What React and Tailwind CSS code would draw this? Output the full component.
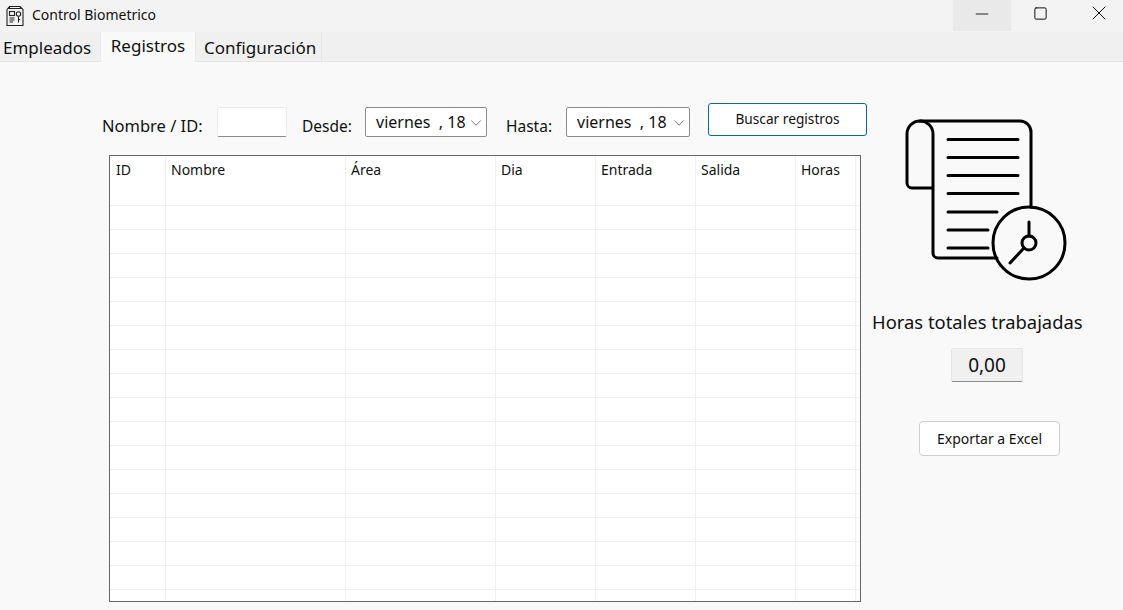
import { useState } from "react";
import { Minus, Square, X, ChevronDown } from "lucide-react";

const columnas = ["ID", "Nombre", "Área", "Dia", "Entrada", "Salida", "Horas", ""];
const filas = Array.from({ length: 18 }, (_, i) => i);
const gridCols = "grid grid-cols-[56px_180px_150px_100px_100px_100px_60px_1fr]";

function AppIcon() {
    return (
        <svg width="20" height="22" viewBox="0 0 20 22" fill="none" stroke="#222" strokeWidth="1.1">
            <path d="M2 4.5L4.5 1.5H15L18 4.5V20.5H2V4.5Z" />
            <path d="M4.5 1.5V3.5M15 1.5L16 3.5H3" />
            <rect x="4.5" y="6.5" width="5" height="4" />
            <path d="M4.5 13h5M4.5 15h5M4.5 17h3.5" />
            <circle cx="13.5" cy="9" r="2.2" />
            <path d="M13.5 11.2V17.5M13.5 14.5H15.2" />
        </svg>
    );
}

function RegistrosIcon() {
    return (
        <svg width="200" height="190" viewBox="0 0 200 190" fill="none" stroke="#000" strokeWidth="3" strokeLinecap="round" strokeLinejoin="round" className="block">
            <path d="M30 16H130a11 11 0 0 1 11 11V102" />
            <path d="M107 153H48a5 5 0 0 1-5-5V29a13 13 0 0 0-26 0V78a5 5 0 0 0 5 5H43" />
            <path d="M58 34.5H128M58 52.5H128M58 70.5H128M58 88.5H128M58 107H107M58 125H98M58 143H98" />
            <circle cx="139" cy="138" r="36" />
            <circle cx="139" cy="138" r="7" />
            <path d="M139 117V131M120 158L134 143" />
        </svg>
    );
}

function FechaSelect({ ancho }) {
    return (
        <div className={`${ancho} h-[30px] bg-white border border-[#8c8c8c] rounded-[2px] flex items-start pt-[2px] pl-[10px] pr-[1px] justify-between`}>
            <span className="text-[16px] leading-[24px] whitespace-pre">viernes  , 18</span>
            <ChevronDown size={18} strokeWidth={1} className="mt-[4px] text-[#444]" />
        </div>
    );
}

export default function App() {
    const [tab] = useState("Registros");

    return (
        <div className="w-[1123px] h-[610px] overflow-hidden bg-[#f9f9f9] text-[#111] font-['Noto_Sans',sans-serif] flex flex-col">
            <div className="h-8 bg-[#f3f3f3] flex items-center justify-between shrink-0">
                <div className="flex items-center pl-[5px] gap-[7px]">
                    <AppIcon />
                    <span className="text-[14px] mb-[3px]">Control Biometrico</span>
                </div>
                <div className="flex h-[31px] self-start">
                    <div className="w-[58px] bg-[#e9e9e9] flex items-center justify-center pb-[4px]">
                        <Minus size={20} strokeWidth={1.1} />
                    </div>
                    <div className="w-[58px] flex items-center justify-center pb-[5px]">
                        <Square size={15} strokeWidth={1.6} />
                    </div>
                    <div className="w-[54px] flex items-center justify-center pb-[5px] pl-[6px]">
                        <X size={24} strokeWidth={1} />
                    </div>
                </div>
            </div>

            <div className="h-[30px] bg-[#f0f0f0] border-b border-[#e5e5e5] flex shrink-0">
                <div className="w-[100px] pl-[3px] text-[17px] leading-[30px] pt-px">Empleados</div>
                <div className={`w-[96px] h-[30px] bg-[#f9f9f9] text-center text-[17px] leading-[28px] border-x border-[#e8e8e8] ${tab === "Registros" ? "" : "hidden"}`}>Registros</div>
                <div className="w-[126px] pl-[8px] text-[17px] leading-[30px] pt-px border-r border-[#e5e5e5]">Configuración</div>
            </div>

            <div className="flex flex-1 min-h-0">
                <div className="w-[867px] pl-[102px] shrink-0">
                    <div className="flex items-start pt-[41px] h-[93px]">
                        <span className="text-[16.5px] leading-[24px] mt-[11px] w-[115px] whitespace-nowrap">Nombre / ID:</span>
                        <div className="w-[70px] h-[30px] mt-[4px] bg-white border border-[#ececec] border-b-[#8c8c8c] rounded-[2px]"></div>
                        <span className="text-[15.5px] leading-[24px] mt-[11px] ml-[15px] w-[63px]">Desde:</span>
                        <div className="mt-[4px]"><FechaSelect ancho="w-[122px]" /></div>
                        <span className="text-[15.5px] leading-[24px] mt-[11px] ml-[19px] w-[60px]">Hasta:</span>
                        <div className="mt-[4px]"><FechaSelect ancho="w-[124px]" /></div>
                        <button className="ml-[18px] w-[159px] h-[33px] bg-white border border-[#0067c0] rounded-[3px] text-[13.7px]">Buscar registros</button>
                    </div>
                    <div className="ml-[7px] w-[752px] h-[447px] bg-white border border-[#666] overflow-hidden">
                        <div className={`${gridCols} h-[26px]`}>
                            {columnas.map((c, i) => (
                                <div key={i} className="pl-[5px] first:pl-[6px] text-[14px] leading-[27px] border-r border-[#f0f0f0] last:border-r-0">{c}</div>
                            ))}
                        </div>
                        {filas.map((f) => (
                            <div key={f} className={`${gridCols} h-6 border-b border-[#f0f0f0]`}>
                                {columnas.map((c, i) => (
                                    <div key={i} className="border-r border-[#f0f0f0] last:border-r-0"></div>
                                ))}
                            </div>
                        ))}
                    </div>
                </div>

                <div className="w-[222px] pt-[43px] flex flex-col items-start">
                    <div className="ml-[23px]"><RegistrosIcon /></div>
                    <div className="ml-[5px] text-[18.4px] mt-[14px] leading-[26px] whitespace-nowrap">Horas totales trabajadas</div>
                    <div className="ml-[84px] w-[72px] h-[34px] mt-[13px] bg-[#f0f0f0] border border-[#e6e6e6] border-b-[#8c8c8c] rounded-[2px] text-[19px] text-center leading-[32px]">0,00</div>
                    <button className="ml-[52px] w-[141px] h-[35px] mt-[39px] bg-white border border-[#cfcfcf] rounded-[4px] text-[14px]">Exportar a Excel</button>
                </div>
            </div>
        </div>
    );
}
